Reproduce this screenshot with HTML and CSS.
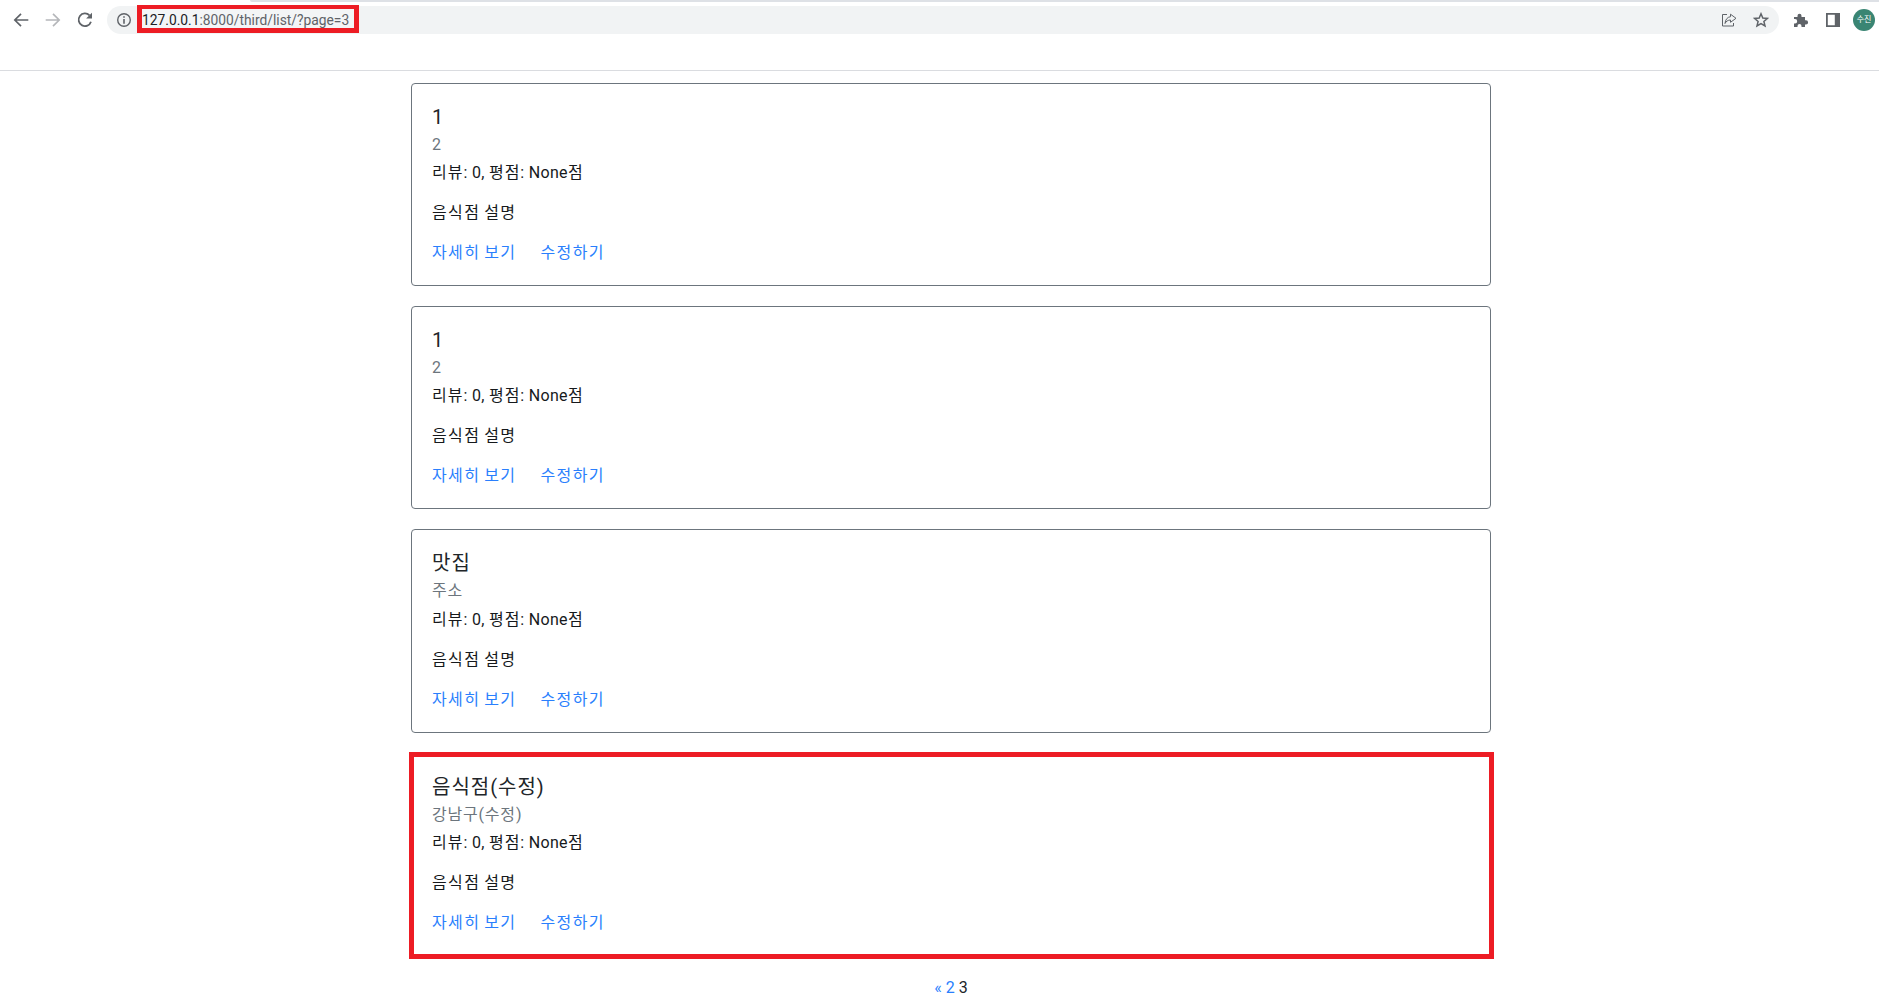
FILE: index.html
```html
<!DOCTYPE html>
<html lang="ko">
<head>
<meta charset="utf-8">
<title>맛집 목록</title>
<link rel="stylesheet" href="styles.css">
</head>
<body>
<header class="browser">
  <div class="tabstrip"></div>
  <div class="toolbar">
    <button class="tool">
      <svg viewBox="0 0 16 16" width="18" height="18"><path d="M14.500 8H2.500M8 2.500 2.500 8 8 13.500" fill="none" stroke="#5f6368" stroke-width="1.500"/></svg>
    </button>
    <button class="tool">
      <svg viewBox="0 0 16 16" width="18" height="18"><path d="M1.500 8h12M8 2.500 13.500 8 8 13.500" fill="none" stroke="#b5b7ba" stroke-width="1.500"/></svg>
    </button>
    <button class="tool">
      <svg viewBox="0 0 16 16" width="18" height="18"><path d="M13.300 9.500A5.600 5.600 0 1 1 12 3.900" fill="none" stroke="#5f6368" stroke-width="1.600"/><path d="M14.200 1.500v5.200H9z" fill="#5f6368"/></svg>
    </button>
    <div class="omnibox">
      <svg class="info" viewBox="0 0 16 16" width="16" height="16"><circle cx="8" cy="8" r="6.300" fill="none" stroke="#5f6368" stroke-width="1.400"/><path d="M7.200 4.200h1.600v1.600H7.200zM7.200 7h1.600v4.800H7.200z" fill="#5f6368"/></svg>
      <div class="url-mark"><span class="url"><span class="host">127.0.0.1</span>:8000/third/list/?page=3</span></div>
      <div class="omni-actions">
        <svg viewBox="0 0 16 16" width="16" height="16"><path d="M6 2.500H1.500v11.500h11v-3" fill="none" stroke="#5f6368" stroke-width="1"/><path d="M9.500 2.200 15 6.300l-5.500 4V8C7 8 5 9.300 4 11.500 4.300 7.500 6.500 5 9.500 4.700z" fill="none" stroke="#5f6368" stroke-width="1"/></svg>
        <svg viewBox="0 0 16 16" width="16" height="16"><path d="M8 1.800 9.800 6l4.600.4-3.500 3 1.100 4.500L8 11.500l-4 2.400 1.100-4.500-3.500-3L6.200 6z" fill="none" stroke="#5f6368" stroke-width="1.500"/></svg>
      </div>
    </div>
    <div class="extras">
      <svg viewBox="0 0 16 16" width="16" height="16"><path d="M1 5h3.500V3.700a2 2 0 0 1 4 0V5H12v3.300h1a2.100 2.100 0 0 1 0 4.200h-1V15H8.500v-1a2 2 0 0 0-4 0v1H1v-3.500h1a2.200 2.200 0 0 0 0-4.400H1z" fill="#5f6368"/></svg>
      <svg viewBox="0 0 16 16" width="16" height="16"><path d="M1 1h14v14H1zM2.800 2.800v10.400h7V2.800z" fill="#5f6368" fill-rule="evenodd"/></svg>
      <span class="avatar">수진</span>
    </div>
  </div>
</header>
<main class="list">
  <article class="card">
    <h5 class="card-title">1</h5>
    <h6 class="card-subtitle">2</h6>
    <p class="card-text">리뷰<span class="latin">: 0, </span>평점<span class="latin">: None</span>점</p>
    <p class="card-text desc">음식점 설명</p>
    <a class="card-link" href="#">자세히 보기</a>
    <a class="card-link" href="#">수정하기</a>
  </article>
  <article class="card">
    <h5 class="card-title">1</h5>
    <h6 class="card-subtitle">2</h6>
    <p class="card-text">리뷰<span class="latin">: 0, </span>평점<span class="latin">: None</span>점</p>
    <p class="card-text desc">음식점 설명</p>
    <a class="card-link" href="#">자세히 보기</a>
    <a class="card-link" href="#">수정하기</a>
  </article>
  <article class="card">
    <h5 class="card-title">맛집</h5>
    <h6 class="card-subtitle">주소</h6>
    <p class="card-text">리뷰<span class="latin">: 0, </span>평점<span class="latin">: None</span>점</p>
    <p class="card-text desc">음식점 설명</p>
    <a class="card-link" href="#">자세히 보기</a>
    <a class="card-link" href="#">수정하기</a>
  </article>
  <article class="card marked">
    <h5 class="card-title">음식점(수정)</h5>
    <h6 class="card-subtitle">강남구(수정)</h6>
    <p class="card-text">리뷰<span class="latin">: 0, </span>평점<span class="latin">: None</span>점</p>
    <p class="card-text desc">음식점 설명</p>
    <a class="card-link" href="#">자세히 보기</a>
    <a class="card-link" href="#">수정하기</a>
  </article>
  <nav class="pagination"><a href="#">«</a> <a href="#">2</a> <span>3</span></nav>
</main>
</body>
</html>
```

FILE: styles.css
```css
* { box-sizing: border-box; }
html, body { margin: 0; height: 100%; overflow: hidden; background: #fff; }
body { font-family: Roboto, "Noto Sans CJK KR", sans-serif; font-size: 16px; line-height: 24px; color: #212529; }

.browser { height: 71px; border-bottom: 1px solid #dadce0; background: #fff; }
.tabstrip { height: 2px; margin-left: 250px; background: #dee1e6; border-bottom-left-radius: 2px; }
.toolbar { display: flex; align-items: flex-start; padding: 4px 4px 0 5px; }
.tool { width: 32px; height: 28px; border: 0; padding: 0; background: none; display: flex; align-items: center; justify-content: center; }
.omnibox { flex: 1; height: 28px; margin-left: 6px; border-radius: 14px; background: #f1f3f4; display: flex; align-items: center; padding-left: 9px; }
.info { flex: none; }
.url-mark { margin: -1px 0 0 5px; align-self: flex-start; height: 28px; width: 222px; border: 5px solid #ed1c24; border-width: 4px 5px 5px; padding-top: 2px; background: #f3f5f6; display: flex; align-items: center; font-size: 13.8px; color: #5f6368; white-space: nowrap; overflow: hidden; }
.host { color: #202124; }
.omni-actions { margin-left: auto; display: flex; gap: 16px; padding-right: 10px; }
.extras { display: flex; align-items: center; gap: 16px; height: 28px; margin-left: 14px; }
.avatar { width: 22px; height: 22px; margin-left: -4px; border-radius: 50%; background: #3a8573; color: #fff; font-size: 8px; line-height: 22px; text-align: center; }

.list { width: 1080px; margin-left: 411px; padding-top: 12px; }
.card { position: relative; border: 1px solid #6c757d; border-radius: 4px; padding: 20px; margin-bottom: 20px; }
.marked::after { content: ""; position: absolute; top: -2px; left: -3px; right: -4px; bottom: -4px; border: 5px solid #ed1c24; }
.card-title { margin: 1px 0 11px; font-size: 20px; line-height: 24px; font-weight: 400; letter-spacing: 1px; }
.card-subtitle { margin: -5px 0 7px; font-size: 16px; line-height: 19.2px; font-weight: 400; color: #6c757d; letter-spacing: .8px; }
.card-text { margin: 0 0 16px; color: #16191c; letter-spacing: 1px; word-spacing: -1.500px; }
.card-text.desc { letter-spacing: 1.400px; }
.latin { letter-spacing: .3px; word-spacing: 0; }
.card-link { color: #2a7ffd; text-decoration: none; letter-spacing: 1.400px; word-spacing: -1.500px; }
.card-link + .card-link { margin-left: 20px; }
.pagination { text-align: center; }
.pagination a { color: #2a7ffd; text-decoration: none; }
```
